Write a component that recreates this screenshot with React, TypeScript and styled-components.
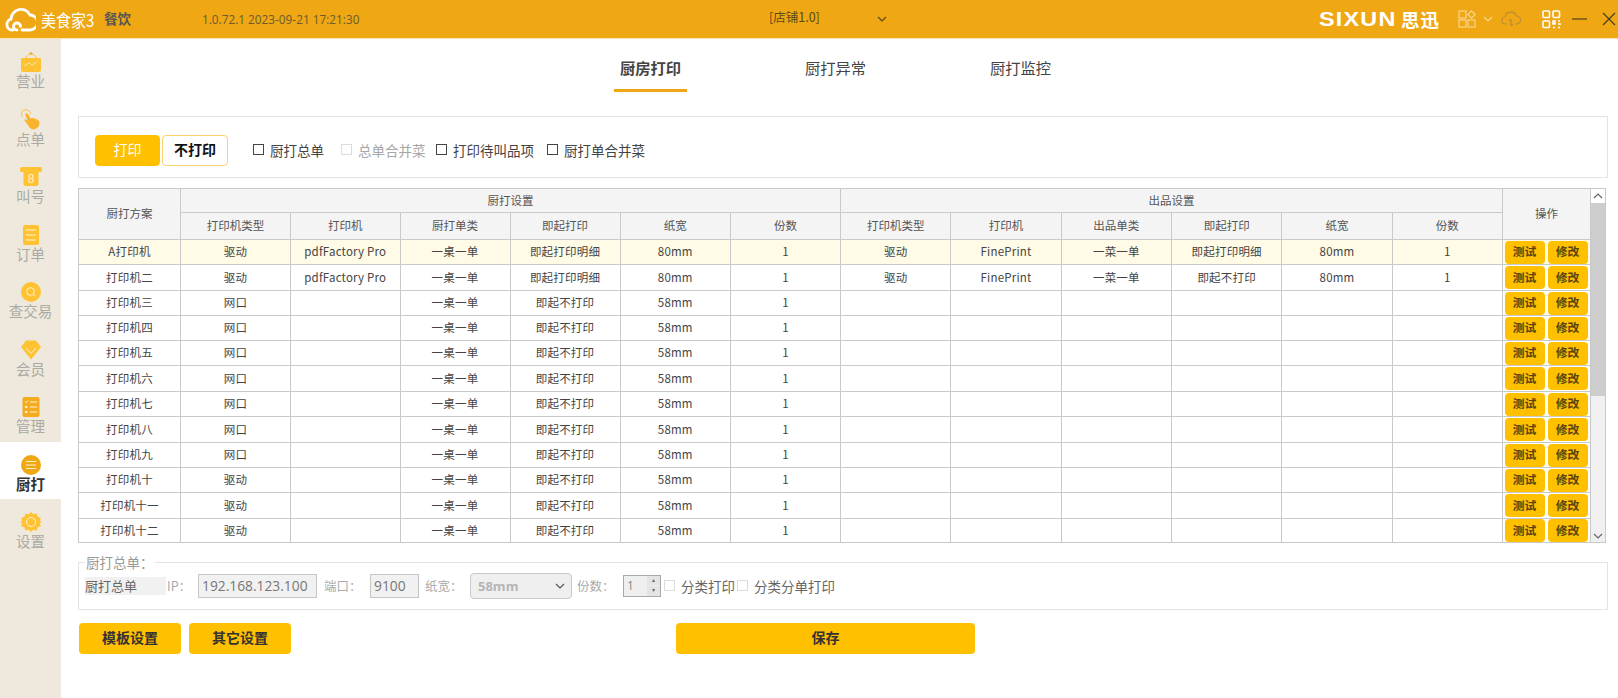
import React from "react";
import styled, { createGlobalStyle } from "styled-components";

const Global = createGlobalStyle`
  html, body { margin: 0; padding: 0; background: #fff; }
  body { font-family: "Noto Sans CJK SC", "Liberation Sans", sans-serif; font-size: 12px; color: #444; }
`;
const Page = styled.div`width: 1618px; height: 698px; display: flex; flex-direction: column; overflow: hidden;`;
const Header = styled.header`height: 39px; background: #efa714; display: flex; align-items: center; flex: none; box-sizing: border-box; border-bottom: 1px solid #f7e3b5; padding-left: 5px;`;
const LogoText = styled.span`margin-left: 5px; width: 60px; color: #fff; font-size: 17px; white-space: nowrap; transform-origin: left center; transform: scaleX(0.88);`;
const Product = styled.span`margin-left: 3px; color: #555; font-size: 13.5px; font-weight: 700; width: 98px; white-space: nowrap; margin-top: -2px;`;
const Version = styled.span`color: #6d5a2e; font-size: 11.8px; font-family: "Open Sans", "Noto Sans CJK SC", sans-serif; width: 567px; white-space: nowrap;`;
const Shop = styled.span`color: #5c4a1d; font-size: 12.5px; width: 108px; white-space: nowrap; margin-top: -6px;`;
const Brand = styled.span`margin-left: 432px; color: #fff; font-family: "Liberation Sans", sans-serif; font-size: 19.5px; font-weight: 700; letter-spacing: 1px; width: 82px; white-space: nowrap; transform-origin: left center; transform: scaleX(1.2);`;
const BrandCn = styled.span`color: #fff; font-size: 18.5px; font-weight: 700; width: 43px; white-space: nowrap; letter-spacing: 1px;`;
const HeadIcon = styled.svg<{ $ml?: number }>`margin-left: ${(p) => p.$ml ?? 0}px; flex: none;`;
const Body = styled.div`flex: 1; display: flex; min-height: 0;`;
const Sidebar = styled.nav`width: 61px; flex: none; background: #efe9dd;`;
const NavItem = styled.div<{ $active?: boolean }>`height: 57.5px; box-sizing: border-box; padding-top: 13px; display: flex; flex-direction: column; align-items: center; background: ${(p) => (p.$active ? "#fff" : "transparent")};`;
const NavLabel = styled.span<{ $active?: boolean }>`font-size: 14.5px; line-height: 18px; white-space: nowrap; color: ${(p) => (p.$active ? "#333" : "#aaa9a3")}; font-weight: ${(p) => (p.$active ? 700 : 400)};`;
const Main = styled.main`flex: 1; min-width: 0; padding: 0 10px 0 17px; display: flex; flex-direction: column;`;
const Tabs = styled.div`height: 53px; display: flex; margin-left: 480px; flex: none;`;
const Tab = styled.div<{ $active?: boolean }>`width: 185px; display: flex; flex-direction: column; align-items: center; padding-top: 16px; box-sizing: border-box; font-size: 15.3px; line-height: 24px; color: #444; font-weight: ${(p) => (p.$active ? 700 : 400)}; &::after { content: ""; width: 73px; height: 3px; background: ${(p) => (p.$active ? "#efa714" : "transparent")}; margin-top: 10px; }`;
const Toolbar = styled.section`margin-top: 24px; height: 62px; box-sizing: border-box; border: 1px solid #e3e3e3; display: flex; align-items: center; padding: 7px 0 0 16px; flex: none;`;
const PrintBtn = styled.button<{ $on?: boolean }>`width: ${(p) => (p.$on ? 65 : 66)}px; height: 31px; margin-right: 2px; border-radius: 4px; padding: 0 0 4px; border: 1px solid ${(p) => (p.$on ? "#ffc000" : "#fdd36b")}; background: ${(p) => (p.$on ? "#ffc000" : "#fff")}; color: ${(p) => (p.$on ? "#fff" : "#111")}; font: ${(p) => (p.$on ? 400 : 700)} 14px "Noto Sans CJK SC", sans-serif;`;
const Check = styled.label<{ $w: number; $off?: boolean; $ml?: number }>`display: flex; align-items: center; width: ${(p) => p.$w}px; margin: -2px 0 0 ${(p) => p.$ml ?? 0}px; font-size: 13.5px; white-space: nowrap; color: ${(p) => (p.$off ? "#a6a6a6" : "#444")}; flex: none;`;
const Box = styled.span<{ $off?: boolean }>`width: 11px; height: 11px; box-sizing: border-box; flex: none; margin-right: 6px; background: #fff; border: 1px solid ${(p) => (p.$off ? "#dcdcdc" : "#444")};`;
const TableWrap = styled.div`margin-top: 10px; display: flex; align-items: stretch; height: 355px; flex: none;`;
const Grid = styled.table`table-layout: fixed; border-collapse: collapse; width: 1513px; height: 355px; flex: none; color: #444;`;
const Th = styled.th`background: #f4f4f4; font-weight: 400; font-size: 11.5px; color: #555; border: 1px solid #c9c9c9; padding: 0 0 2px; text-align: center; white-space: nowrap;`;
const HeadRow = styled.tr<{ $h: number }>`height: ${(p) => p.$h}px;`;
const Row = styled.tr<{ $h: number; $hi?: boolean }>`height: ${(p) => p.$h}px; background: ${(p) => (p.$hi ? "#fffbe6" : "#fff")};`;
const Td = styled.td`border: 1px solid #c9c9c9; padding: 0 0 2px; text-align: center; font-size: 11.5px; white-space: nowrap; overflow: hidden; letter-spacing: 0.2px;`;
const ActionTd = styled(Td)`padding: 0;`;
const Actions = styled.div`display: flex; justify-content: center; gap: 3px; padding-right: 1px;`;
const MiniBtn = styled.button`width: 40px; height: 23px; padding: 0 0 3px; border: none; border-radius: 4px; background: #ffc000; color: #5a4510; font: 700 11.8px "Noto Sans CJK SC", sans-serif;`;
const Scroll = styled.div`width: 15px; flex: none; box-sizing: border-box; background: #f0f0f0; border: 1px solid #c9c9c9; border-left: none; display: flex; flex-direction: column; align-items: center; justify-content: space-between; padding-bottom: 3px;`;
const ScrollTop = styled.div`display: flex; flex-direction: column; align-items: stretch; align-self: stretch;`;
const ScrollUp = styled.div`height: 14px; background: #fff; display: flex; align-items: center; justify-content: center;`;
const Thumb = styled.div`height: 193px; background: #cdcdcd;`;
const Field = styled.fieldset`margin: 19px 0 0; padding: 0 0 0 6px; height: 48px; box-sizing: border-box; border: 1px solid #e3e3e3; flex: none; position: relative; display: flex; align-items: flex-start;`;
const Legend = styled.span`position: absolute; left: 6px; top: -10px; padding: 0 1px 0 1px; background: #fff; font-size: 13.5px; line-height: 18px; color: #999;`;
const FieldRow = styled.div`display: flex; align-items: center; height: 27px; margin-top: 9px;`;
const NameTag = styled.span`width: 81px; height: 18px; line-height: 18px; background: #f1f1f1; font-size: 13px; color: #666; flex: none;`;
const Hint = styled.span<{ $w: number; $ml: number }>`width: ${(p) => p.$w}px; margin-left: ${(p) => p.$ml}px; font-size: 12.5px; color: #aaa; flex: none; white-space: nowrap;`;
const Input = styled.span<{ $w: number; $h?: number }>`width: ${(p) => p.$w}px; height: ${(p) => p.$h ?? 24}px; box-sizing: border-box; border: 1px solid #c6c6c6; background: #f1f1f1; color: #777; font-family: "Open Sans", sans-serif; font-size: 13.8px; display: flex; align-items: center; padding-left: 3px; flex: none;`;
const Select = styled.span`width: 102px; height: 26px; box-sizing: border-box; border: 1px solid #c9c9c9; border-radius: 4px; background: #efefef; color: #b5b5b5; font: 700 13px "Open Sans", sans-serif; display: flex; align-items: center; justify-content: space-between; padding: 0 6px 0 7px; flex: none;`;
const Spin = styled.span`width: 38px; height: 22px; box-sizing: border-box; border: 1px solid #aaa; background: #efefef; color: #888; display: flex; font-size: 12px; font-family: "Open Sans", sans-serif; flex: none; align-items: center; justify-content: space-between; padding-left: 3px; margin-right: 3px;`;
const SpinArrows = styled.span`width: 13px; height: 20px; display: flex; flex-direction: column; gap: 1px; flex: none;`;
const SpinArrow = styled.span`flex: 1; background: #e4e4e4; color: #666; font-size: 6px; line-height: 9px; text-align: center;`;
const Small = styled.label<{ $w: number }>`display: flex; align-items: center; width: ${(p) => p.$w}px; font-size: 13.5px; color: #666; white-space: nowrap; flex: none;`;
const Footer = styled.div`display: flex; margin-top: 13px; margin-left: 1px;`;
const ActionBtn = styled.button<{ $w: number; $mr: number }>`width: ${(p) => p.$w}px; height: 31px; margin-right: ${(p) => p.$mr}px; border: none; border-radius: 4px; background: #ffc000; color: #333; padding: 0 0 4px; font: 700 14px "Noto Sans CJK SC", sans-serif;`;

const gold = "#ffc233";
const icons: Record<string, React.ReactNode> = {
  bag: (<><path d="M10 0.5 4 6M10 0.5 16 6" stroke={gold} fill="none" /><circle cx="10" cy="1.5" r="1.5" fill="#e8b44a" /><path d="M1 6h18a1 1 0 0 1 1 1v11a2 2 0 0 1-2 2H2a2 2 0 0 1-2-2V7a1 1 0 0 1 1-1z" fill={gold} /><path d="M3 14l5-3 3 2 6-4" stroke="#fde3a0" fill="none" /></>),
  hand: (<><path d="M1.500 7a4.500 4.500 0 1 1 8-3" fill="none" stroke={gold} strokeWidth="1" /><path d="M5 3.600c1-.6 2 .1 2.400 1l2.200 4c1-.5 2.500-1 3.400-.3l3 1.300c1.800.7 2.800 2.400 2.400 4.400-.6 3.200-3.200 5.600-6.600 5.200-2.700-.3-3.800-2.800-5.200-4.800L3.500 10.500c-.5-.9.5-1.700 1.400-1.100l2 1.600L4.500 5.400c-.3-.6 0-1.400.5-1.800z" fill="#f7b32b" /></>),
  ticket: (<><rect x="-1" y="0" width="22" height="5" rx="1.500" fill={gold} /><path d="M2.500 3h15v14a2 2 0 0 1-2 2h-11a2 2 0 0 1-2-2z" fill={gold} /><text x="10" y="15.500" textAnchor="middle" fontSize="12" fill="#fff3cf" fontFamily="Liberation Sans">8</text></>),
  doc: (<><rect x="2" y="0" width="16" height="20" rx="2" fill={gold} /><path d="M5 5h10M5 10h10M5 15h10" stroke="#fff3cf" strokeWidth="1.200" /></>),
  search: (<><circle cx="10" cy="10" r="10" fill={gold} /><circle cx="9.500" cy="9.500" r="3.800" fill="none" stroke="#fff3cf" /><path d="M12.500 12.500l2 2" stroke="#fff3cf" /></>),
  gem: (<><path d="M5 0.500h10l5 6.500-10 12.500L0 7z" fill={gold} /><path d="M5 8l5 5.500L15 8" stroke="#fff3cf" fill="none" /></>),
  list: (<><rect x="1.500" y="0" width="17" height="20" rx="2" fill="#f4ab1e" /><path d="M9 5h7M9 10h7M9 15h7" stroke="#fff3cf" strokeWidth="1.200" /><path d="M4 4.500l1.200 1.300L7 3.500" stroke="#fff3cf" fill="none" /><circle cx="5.200" cy="10" r="1.300" fill="#fff3cf" /><circle cx="5.200" cy="15" r="1.300" fill="#fff3cf" /></>),
  menu: (<><circle cx="10" cy="10" r="10" fill="#efa714" /><path d="M5 6.500h10M5 10h10M5 13.500h10" stroke="#fff3cf" strokeWidth="1.200" /></>),
  gear: (<><path d="M10 0l2.400 2.300 3.200-.7 1 3.100 3.100 1-.7 3.200L21 10l-2 1.100.7 3.200-3.100 1-1 3.100-3.200-.7L10 20l-2.400-2.300-3.200.7-1-3.100-3.100-1 .7-3.200L-1 10l2-1.100-.7-3.200 3.100-1 1-3.100 3.200.7z" fill={gold} /><circle cx="10" cy="10" r="4.500" fill="none" stroke="#fff3cf" /></>),
};
const navs = [["bag", "营业"], ["hand", "点单"], ["ticket", "叫号"], ["doc", "订单"], ["search", "查交易"], ["gem", "会员"], ["list", "管理"], ["menu", "厨打"], ["gear", "设置"]];
const names = ["A打印机", "打印机二", "打印机三", "打印机四", "打印机五", "打印机六", "打印机七", "打印机八", "打印机九", "打印机十", "打印机十一", "打印机十二"];
const rowH = [25, 26, 25, 25, 25, 26, 25, 26, 25, 25, 26, 24];
const sub = ["打印机类型", "打印机", "出品单类", "即起打印", "纸宽", "份数"];
const subA = ["打印机类型", "打印机", "厨打单类", "即起打印", "纸宽", "份数"];
const colW = [110, 109.5, 110, 110, 110.5, 110];
const Chevron = ({ c = "#555", ml = 0, up = false }: { c?: string; ml?: number; up?: boolean }) => (
  <HeadIcon $ml={ml} width="10" height="6" viewBox="0 0 10 6"><path d={up ? "M1 5l4-4 4 4" : "M1 1l4 4 4-4"} fill="none" stroke={c} strokeWidth="1.200" /></HeadIcon>
);

export default function App() {
  return (
    <Page>
      <Global />
      <Header>
        <HeadIcon width="31" height="26" viewBox="0 0 31 26"><path d="M8 24H7a5.500 5.500 0 0 1-1-10.800A10 10 0 0 1 25 9a7.500 7.500 0 0 1 0 15h-8M12 24a3.500 3.500 0 1 1 3.500-3.500" fill="none" stroke="#fff" strokeWidth="2.800" strokeLinecap="round" /></HeadIcon>
        <LogoText>美食家3</LogoText>
        <Product>餐饮</Product>
        <Version>1.0.72.1 2023-09-21 17:21:30</Version>
        <Shop>[店铺1.0]</Shop>
        <Chevron c="#5c4a1d" />
        <Brand>SIXUN</Brand>
        <BrandCn>思迅</BrandCn>
        <HeadIcon $ml={14} width="22" height="18" viewBox="0 0 22 18"><g fill="none" stroke="#f9d58e" strokeWidth="1.200"><rect x="1" y="1" width="7" height="7" /><rect x="1" y="10" width="7" height="7" /><rect x="10" y="10" width="7" height="7" /><path d="M13.500 .8l3.700 3.700-3.700 3.700-3.700-3.700z" /></g></HeadIcon>
        <Chevron c="#f9d58e" ml={3} />
        <HeadIcon $ml={8} width="20" height="18" viewBox="0 0 20 18"><path d="M6 14H4.500a3.500 3.500 0 0 1-.5-7A6 6 0 0 1 15.500 6a4 4 0 0 1 0 8H14M10 9v7M8 11l2-2M12 14l-2 2" fill="none" stroke="#b98b3a" strokeWidth="1.100" /></HeadIcon>
        <HeadIcon $ml={21} width="19" height="19" viewBox="0 0 19 19"><g fill="none" stroke="#fff" strokeWidth="1.600"><rect x="1" y="1" width="6.500" height="6.500" rx="1" /><rect x="11" y="1" width="6.500" height="6.500" rx="1" /><rect x="1" y="11" width="6.500" height="6.500" rx="1" /><path d="M11 11h2v3h-2zM16 11h2M16 14h2v1M11 17.500h2M16 17.500h2" /></g></HeadIcon>
        <HeadIcon $ml={11} width="15" height="4" viewBox="0 0 15 4"><path d="M0 2h15" stroke="#5c4a1d" strokeWidth="1.300" /></HeadIcon>
        <HeadIcon $ml={15} width="14" height="14" viewBox="0 0 14 14"><path d="M1 1l12 12M13 1L1 13" stroke="#4d4022" strokeWidth="1.300" /></HeadIcon>
      </Header>
      <Body>
        <Sidebar>
          {navs.map(([k, l]) => (
            <NavItem key={l} $active={l === "厨打"}>
              <svg width="20" height="20" viewBox="0 0 20 20" style={{ overflow: "visible", flex: "none" }}>{icons[k]}</svg>
              <NavLabel $active={l === "厨打"}>{l}</NavLabel>
            </NavItem>
          ))}
        </Sidebar>
        <Main>
          <Tabs>
            <Tab $active>厨房打印</Tab>
            <Tab>厨打异常</Tab>
            <Tab>厨打监控</Tab>
          </Tabs>
          <Toolbar>
            <PrintBtn $on>打印</PrintBtn>
            <PrintBtn>不打印</PrintBtn>
            <Check $w={88} $ml={23}><Box />厨打总单</Check>
            <Check $w={95} $off><Box $off />总单合并菜</Check>
            <Check $w={111}><Box />打印待叫品项</Check>
            <Check $w={110}><Box />厨打单合并菜</Check>
          </Toolbar>
          <TableWrap>
            <Grid>
              <colgroup>
                <col style={{ width: 102 }} />
                {colW.map((w, i) => <col key={i} style={{ width: w }} />)}
                {Array.from({ length: 6 }).map((_, i) => <col key={i + 6} style={{ width: 110.33 }} />)}
                <col style={{ width: 88 }} />
              </colgroup>
              <thead>
                <HeadRow $h={24}>
                  <Th rowSpan={2}>厨打方案</Th>
                  <Th colSpan={6}>厨打设置</Th>
                  <Th colSpan={6}>出品设置</Th>
                  <Th rowSpan={2}>操作</Th>
                </HeadRow>
                <HeadRow $h={27}>
                  {subA.map((t, i) => <Th key={i}>{t}</Th>)}
                  {sub.map((t, i) => <Th key={i + 6}>{t}</Th>)}
                </HeadRow>
              </thead>
              <tbody>
                {names.map((n, i) => {
                  const first = i < 2;
                  const net = i >= 2 && i < 9;
                  const out = first
                    ? ["驱动", "FinePrint", "一菜一单", i === 0 ? "即起打印明细" : "即起不打印", "80mm", "1"]
                    : ["", "", "", "", "", ""];
                  const cells = [net ? "网口" : "驱动", first ? "pdfFactory Pro" : "", "一桌一单", first ? "即起打印明细" : "即起不打印", first ? "80mm" : "58mm", "1"];
                  return (
                    <Row key={n} $h={rowH[i]} $hi={i === 0}>
                      <Td>{n}</Td>
                      {cells.map((c, j) => <Td key={j}>{c}</Td>)}
                      {out.map((c, j) => <Td key={j + 6}>{c}</Td>)}
                      <ActionTd><Actions><MiniBtn>测试</MiniBtn><MiniBtn>修改</MiniBtn></Actions></ActionTd>
                    </Row>
                  );
                })}
              </tbody>
            </Grid>
            <Scroll>
              <ScrollTop>
                <ScrollUp><Chevron up c="#666" /></ScrollUp>
                <Thumb />
              </ScrollTop>
              <Chevron c="#666" />
            </Scroll>
          </TableWrap>
          <Field>
            <Legend>厨打总单：</Legend>
            <FieldRow>
              <NameTag>厨打总单</NameTag>
              <Hint $w={31} $ml={1}>IP：</Hint>
              <Input $w={119}>192.168.123.100</Input>
              <Hint $w={46} $ml={7}>端口：</Hint>
              <Input $w={49}>9100</Input>
              <Hint $w={45} $ml={6}>纸宽：</Hint>
              <Select>58mm<Chevron c="#555" /></Select>
              <Hint $w={46} $ml={5}>份数：</Hint>
              <Spin>1<SpinArrows><SpinArrow>▴</SpinArrow><SpinArrow>▾</SpinArrow></SpinArrows></Spin>
              <Small $w={73}><Box $off />分类打印</Small>
              <Small $w={100}><Box $off />分类分单打印</Small>
            </FieldRow>
          </Field>
          <Footer>
            <ActionBtn $w={102} $mr={8}>模板设置</ActionBtn>
            <ActionBtn $w={102} $mr={385}>其它设置</ActionBtn>
            <ActionBtn $w={299} $mr={0}>保存</ActionBtn>
          </Footer>
        </Main>
      </Body>
    </Page>
  );
}
